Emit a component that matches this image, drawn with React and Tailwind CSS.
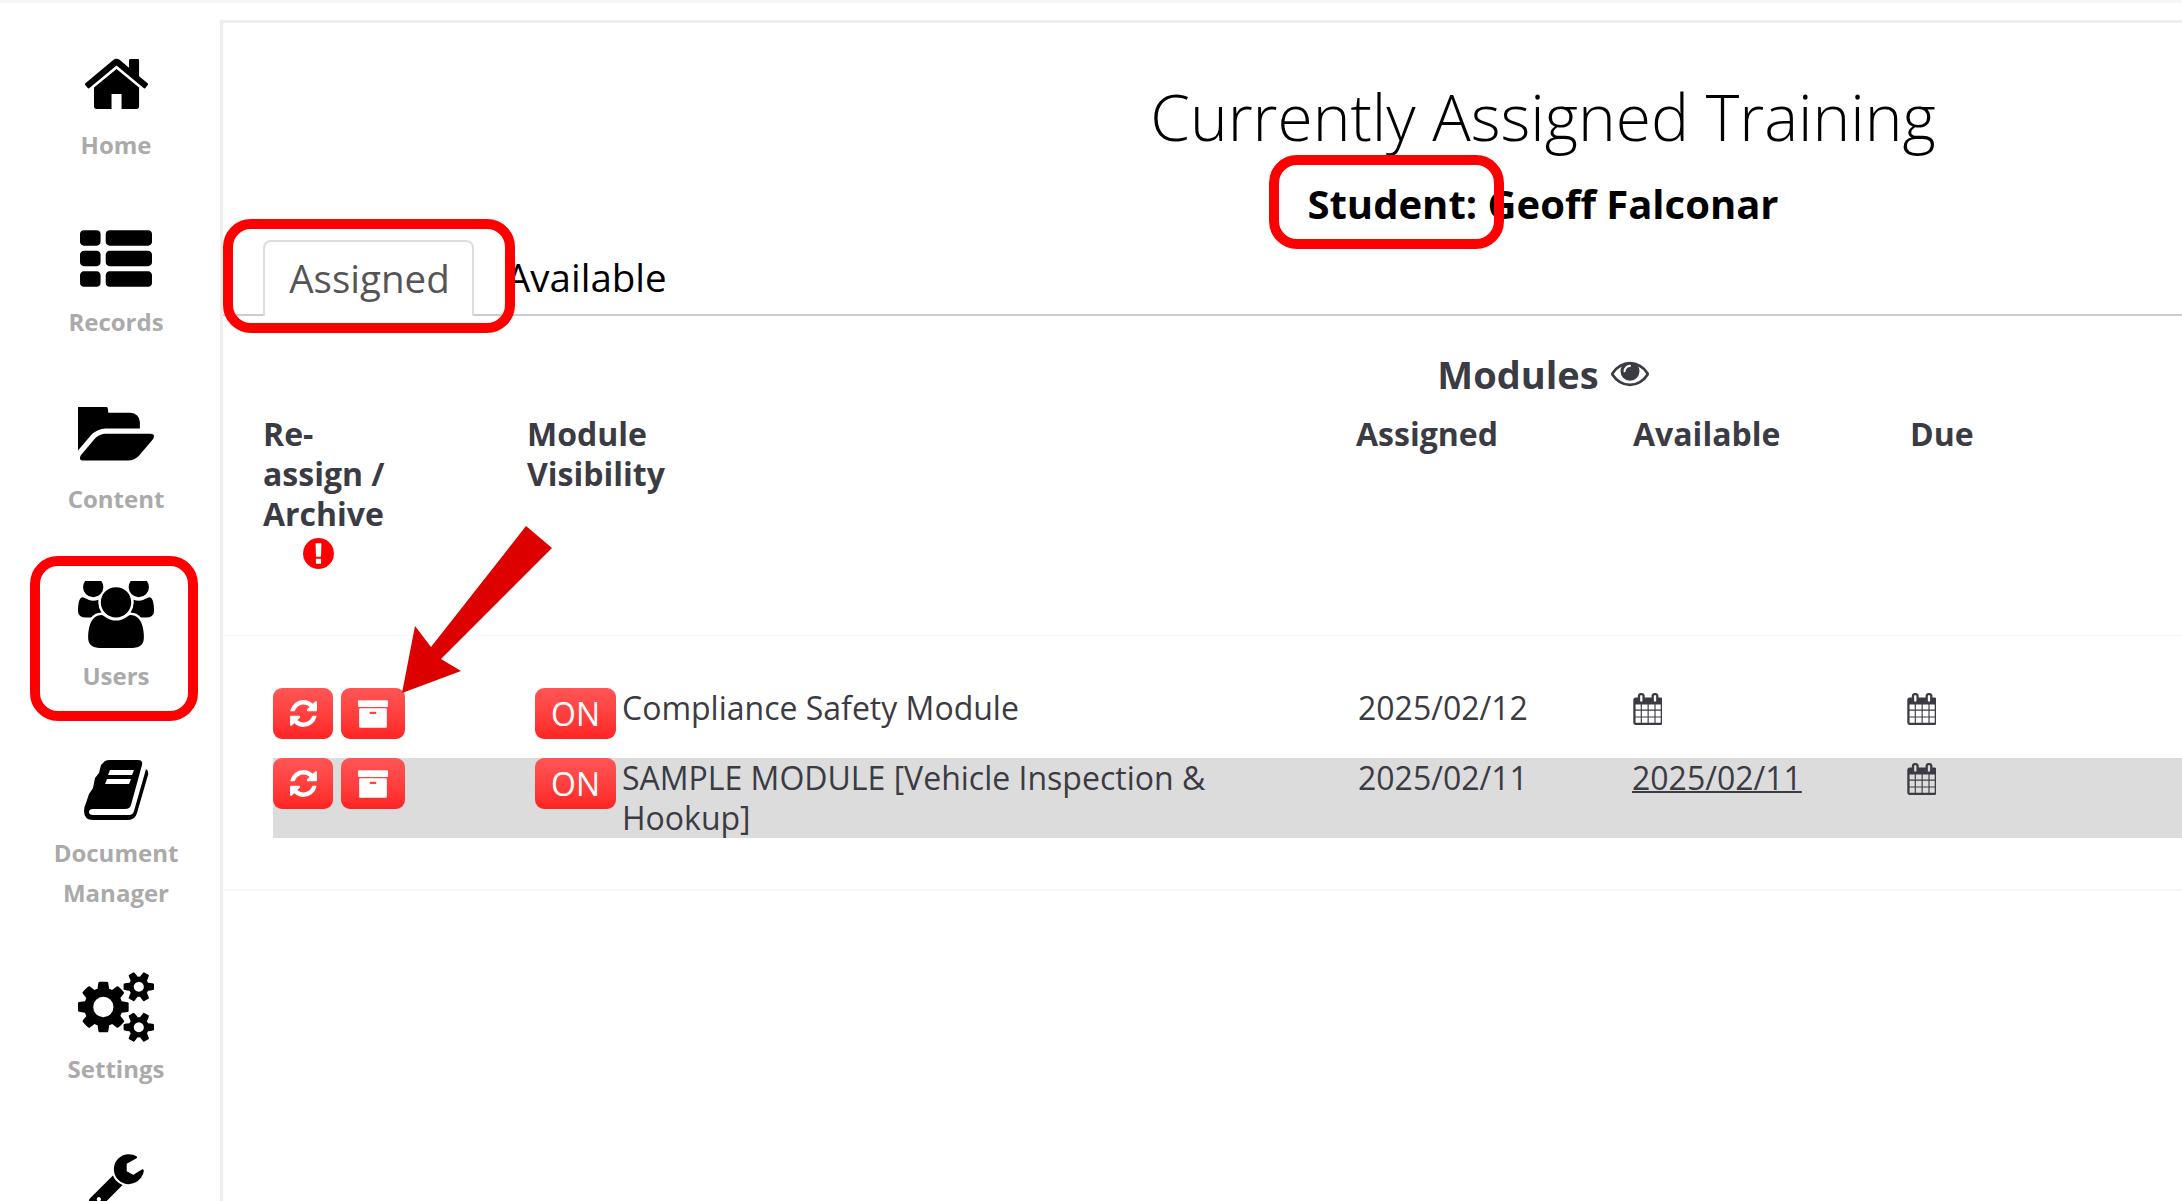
const ICONS = {
  home: ["90 256 1610 1280", "M1472 992v480q0 26-19 45t-45 19h-384v-384h-256v384h-384q-26 0-45-19t-19-45v-480q0-1 .5-3t.5-3l575-474 575 474q1 2 1 6zm223-69l-62 74q-8 9-21 11h-3q-13 0-21-7l-692-577-692 577q-12 8-24 7-13-2-21-11l-62-74q-8-10-7-23.5t11-21.5l719-599q32-26 76-26t76 26l244 204v-195q0-14 9-23t23-9h192q14 0 23 9t9 23v408l219 182q10 8 11 21.5t-7 23.5z"],
  records: ["0 128 1792 1408", "M512 1248v192q0 40-28 68t-68 28h-320q-40 0-68-28t-28-68v-192q0-40 28-68t68-28h320q40 0 68 28t28 68zm0-512v192q0 40-28 68t-68 28h-320q-40 0-68-28t-28-68v-192q0-40 28-68t68-28h320q40 0 68 28t28 68zm1280 512v192q0 40-28 68t-68 28h-960q-40 0-68-28t-28-68v-192q0-40 28-68t68-28h960q40 0 68 28t28 68zm-1280-1024v192q0 40-28 68t-68 28h-320q-40 0-68-28t-28-68v-192q0-40 28-68t68-28h320q40 0 68 28t28 68zm1280 512v192q0 40-28 68t-68 28h-960q-40 0-68-28t-28-68v-192q0-40 28-68t68-28h960q40 0 68 28t28 68zm0-512v192q0 40-28 68t-68 28h-960q-40 0-68-28t-28-68v-192q0-40 28-68t68-28h960q40 0 68 28t28 68z"],
  folder: ["0 256 1845 1344", "M1845 931q0 35-25 76l-336 396q-43 51-120.5 86.5t-143.5 35.5h-1088q-34 0-60.5-13t-26.5-43q0-35 25-76l336-396q43-51 120.5-86.5t143.5-35.5h1088q34 0 60.5 13t26.5 43zm-343-344v160h-832q-94 0-197 47.5t-164 119.5l-337 396-5 6q0-4-.5-12.5t-.5-12.5v-960q0-92 66-158t158-66h320q92 0 158 66t66 158v32h544q92 0 158 66t66 158z"],
  users: ["0 128 1920 1664", "M593 896q-162 5-265 128h-134q-82 0-138-40.5t-56-118.5q0-353 124-353 6 0 43.5 21t97.5 42.5 119 21.5q67 0 133-23-5 37-5 66 0 139 81 256zm1071 637q0 120-73 189.5t-194 69.5h-874q-121 0-194-69.5t-73-189.5q0-53 3.5-103.5t14-109 26.5-108.5 43-97.5 62-81 85.5-53.5 111.5-20q10 0 43 21.5t73 48 107 48 135 21.5 135-21.5 107-48 73-48 43-21.5q61 0 111.5 20t85.5 53.5 62 81 43 97.5 26.5 108.5 14 109 3.5 103.5zm-1024-1277q0 106-75 181t-181 75-181-75-75-181 75-181 181-75 181 75 75 181zm704 384q0 159-112.5 271.5t-271.5 112.5-271.5-112.5-112.5-271.5 112.5-271.5 271.5-112.5 271.5 112.5 112.5 271.5zm576 225q0 78-56 118.5t-138 40.5h-134q-103-123-265-128 81-117 81-256 0-29-5-66 66 23 133 23 59 0 119-21.5t97.5-42.5 43.5-21q124 0 124 353zm-128-609q0 106-75 181t-181 75-181-75-75-181 75-181 181-75 181 75 75 181z"],
  cogs: ["0 128 1920 1536", "M896 896q0-106-75-181t-181-75-181 75-75 181 75 181 181 75 181-75 75-181zm768 512q0-52-38-90t-90-38-90 38-38 90q0 53 37.5 90.5t90.5 37.5 90.5-37.5 37.5-90.5zm0-1024q0-52-38-90t-90-38-90 38-38 90q0 53 37.5 90.5t90.5 37.5 90.5-37.5 37.5-90.5zm-384 421v185q0 10-7 19.5t-16 10.5l-155 24q-11 35-32 76 34 48 90 115 7 11 7 20 0 12-7 19-23 30-82.5 89.5t-78.5 59.5q-11 0-21-7l-115-90q-37 19-77 31-11 108-23 155-7 24-30 24h-186q-11 0-20-7.5t-10-17.5l-23-153q-34-10-75-31l-118 89q-7 7-20 7-11 0-21-8-144-133-144-160 0-9 7-19 10-14 41-53t47-61q-23-44-35-82l-152-24q-10-1-17-9.5t-7-19.5v-185q0-10 7-19.5t16-10.5l155-24q11-35 32-76-34-48-90-115-7-11-7-20 0-12 7-20 22-30 82-89t79-59q11 0 21 7l115 90q34-18 77-32 11-108 23-154 7-24 30-24h186q11 0 20 7.5t10 17.5l23 153q34 10 75 31l118-89q8-7 20-7 11 0 21 8 144 133 144 160 0 8-7 19-12 16-42 54t-45 60q23 48 34 82l152 23q10 2 17 10.5t7 19.5zm640 533v140q0 16-149 31-12 27-30 52 51 113 51 138 0 4-4 7-122 71-124 71-8 0-46-47t-52-68q-20 2-30 2t-30-2q-14 21-52 68t-46 47q-2 0-124-71-4-3-4-7 0-25 51-138-18-25-30-52-149-15-149-31v-140q0-16 149-31 13-29 30-52-51-113-51-138 0-4 4-7 4-2 35-20t59-34 30-16q8 0 46 46.5t52 67.5q20-2 30-2t30 2q51-71 92-112l6-2q4 0 124 70 4 3 4 7 0 25-51 138 17 23 30 52 149 15 149 31zm0-1024v140q0 16-149 31-12 27-30 52 51 113 51 138 0 4-4 7-122 71-124 71-8 0-46-47t-52-68q-20 2-30 2t-30-2q-14 21-52 68t-46 47q-2 0-124-71-4-3-4-7 0-25 51-138-18-25-30-52-149-15-149-31v-140q0-16 149-31 13-29 30-52-51-113-51-138 0-4 4-7 4-2 35-20t59-34 30-16q8 0 46 46.5t52 67.5q20-2 30-2t30 2q51-71 92-112l6-2q4 0 124 70 4 3 4 7 0 25-51 138 17 23 30 52 149 15 149 31z"],
  wrench: ["0 128 1792 1664", "M448 1472q0-26-19-45t-45-19-45 19-19 45 19 45 45 19 45-19 19-45zm644-420l-682 682q-37 37-90 37-52 0-91-37l-106-108q-38-36-38-90 0-53 38-91l681-681q39 98 114.5 173.5t173.5 114.5zm634-435q0 39-23 106-47 134-164.5 217.5t-258.5 83.5q-185 0-316.5-131.5t-131.5-316.5 131.5-316.5 316.5-131.5q58 0 121.5 16.5t107.5 46.5q16 11 16 28t-16 28l-293 169v224l193 107q5-3 79-48.5t135.5-81 70.5-35.5q15 0 23.5 10t8.5 25z"],
  refresh: ["128 128 1536 1536", "M1639 1056q0 5-1 7-64 268-268 434.5t-478 166.5q-146 0-282.5-55t-243.5-157l-129 129q-19 19-45 19t-45-19-19-45v-448q0-26 19-45t45-19h448q26 0 45 19t19 45-19 45l-137 137q71 66 161 102t187 36q134 0 250-65t186-179q11-17 53-117 8-23 30-23h192q13 0 22.5 9.5t9.5 22.5zm25-800v448q0 26-19 45t-45 19h-448q-26 0-45-19t-19-45 19-45l138-138q-148-137-349-137-134 0-250 65t-186 179q-11 17-53 117-8 23-30 23h-199q-13 0-22.5-9.5t-9.5-22.5v-7q65-268 270-434.5t480-166.5q146 0 284 55.5t245 156.5l130-129q19-19 45-19t45 19 19 45z"],
  archive: ["64 128 1664 1536", "M1088 832q0-26-19-45t-45-19h-256q-26 0-45 19t-19 45 19 45 45 19h256q26 0 45-19t19-45zm576-192v960q0 26-19 45t-45 19h-1408q-26 0-45-19t-19-45v-960q0-26 19-45t45-19h1408q26 0 45 19t19 45zm64-448v256q0 26-19 45t-45 19h-1536q-26 0-45-19t-19-45v-256q0-26 19-45t45-19h1536q26 0 45 19t19 45z"],
  alert: ["128 128 1536 1536", "M896 128q209 0 385.5 103t279.5 279.5 103 385.5-103 385.5-279.5 279.5-385.5 103-385.5-103-279.5-279.5-103-385.5 103-385.5 279.5-279.5 385.5-103zm128 1247v-190q0-14-9-23.5t-22-9.5h-192q-13 0-23 10t-10 23v190q0 13 10 23t23 10h192q13 0 22-9.5t9-23.5zm-2-344l18-621q0-12-10-18-10-8-24-8h-220q-14 0-24 8-10 6-10 18l17 621q0 10 10 17.5t24 7.5h185q14 0 23.5-7.5t10.5-17.5z"],
  eye: ["0 320 1792 1280", "M1664 960q-152-236-381-353 61 104 61 225 0 185-131.5 316.5t-316.5 131.5-316.5-131.5-131.5-316.5q0-121 61-225-229 117-381 353 133 205 333.5 326.5t434.5 121.5 434.5-121.5 333.5-326.5zm-720-384q0-20-14-34t-34-14q-125 0-214.5 89.5t-89.5 214.5q0 20 14 34t34 14 34-14 14-34q0-86 61-147t147-61q20 0 34-14t14-34zm848 384q0 34-20 69-140 230-376.5 368.5t-499.5 138.5-499.5-139-376.5-368q-20-35-20-69t20-69q140-229 376.5-368t499.5-139 499.5 139 376.5 368q20 35 20 69z"],
  calendar: ["0 0 1664 1792", "M192 1664h288v-288h-288v288zm352 0h320v-288h-320v288zm-352-352h288v-320h-288v320zm352 0h320v-320h-320v320zm-352-384h288v-288h-288v288zm736 736h320v-288h-320v288zm-384-736h320v-288h-320v288zm768 736h288v-288h-288v288zm-384-352h320v-320h-320v320zm-352-864v-288q0-13-9.5-22.5t-22.5-9.5h-64q-13 0-22.5 9.5t-9.5 22.5v288q0 13 9.5 22.5t22.5 9.5h64q13 0 22.5-9.5t9.5-22.5zm736 864h288v-320h-288v320zm-384-384h320v-288h-320v288zm384 0h288v-288h-288v288zm32-480v-288q0-13-9.5-22.5t-22.5-9.5h-64q-13 0-22.5 9.5t-9.5 22.5v288q0 13 9.5 22.5t22.5 9.5h64q13 0 22.5-9.5t9.5-22.5zm384-64v1280q0 52-38 90t-90 38h-1408q-52 0-90-38t-38-90v-1280q0-52 38-90t90-38h128v-96q0-66 47-113t113-47h64q66 0 113 47t47 113v96h384v-96q0-66 47-113t113-47h64q66 0 113 47t47 113v96h128q52 0 90 38t38 90z"],
};

function Icon({ name, className }) {
  const [viewBox, d] = ICONS[name];
  return (
    <svg viewBox={viewBox} className={className} fill="currentColor">
      <path d={d} />
    </svg>
  );
}

function BookIcon() {
  return (
    <svg viewBox="0 0 65 60" className="w-[65px] h-[60px] mb-[3px] text-black" fill="currentColor">
      <path d="M21 1 Q23 0 26 0 H54 Q59 0 58 5 L47 45 Q46 49 41 49 H9 Q5 49 5 52 Q5 55 9 55 H45 Q49 55 50 51 L62 9 Q65 11 64 15 L53 53 Q51 60 44 60 H9 Q0 60 0 51 Q0 47 2 43 L5 34 L9 28 L11 18 L15 13 L17 5 Z" />
      <path d="M26 10 H50 L48 15 H24 Z M23 19 H47 L45 24 H21 Z" fill="#fff" />
    </svg>
  );
}

const NAV = [
  { label: ["Home"], icon: <Icon name="home" className="w-[63px] h-[52px] mb-[5px]" />, h: "h-[177px]" },
  { label: ["Records"], icon: <Icon name="records" className="w-[72px] h-[57px] mb-[5px]" />, h: "h-[177px]" },
  { label: ["Content"], icon: <Icon name="folder" className="w-[76px] h-[58px] mb-[4px]" />, h: "h-[177px]" },
  { label: ["Users"], icon: <Icon name="users" className="w-[76px] h-[68px] -mb-[3px]" />, h: "h-[177px]" },
  { label: ["Document", "Manager"], icon: <BookIcon />, h: "h-[216px]" },
  { label: ["Settings"], icon: <Icon name="cogs" className="w-[76px] h-[70px] -mb-[3px]" />, h: "h-[170px]" },
  { label: [], icon: <Icon name="wrench" className="w-[60px] h-[60px] -mb-[3px]" />, h: "h-[80px]" },
];

function NavItem({ item }) {
  return (
    <div className={`${item.h} flex flex-col items-center`}>
      <div className="h-[70px] flex items-end text-black">{item.icon}</div>
      <div className="mt-[10px] text-center text-[24px] leading-[40px] font-bold text-[#aaaaaa]">
        {item.label.map((line) => (
          <div key={line}>{line}</div>
        ))}
      </div>
    </div>
  );
}

const redBtn =
  "h-[51px] rounded-[9px] bg-gradient-to-b from-[#ff5555] to-[#ff2222] text-white flex items-center justify-center";

function Row({ name, assigned, available, shaded }) {
  return (
    <div
      className={`grid grid-cols-[262px_823px_274px_274px_1fr] text-[32px] leading-[40px] text-[#3b3b44] ${
        shaded ? "bg-[#dcdcdc] h-[80px]" : "h-[70px]"
      }`}
    >
      <div className="flex gap-[8px]">
        <div className={`${redBtn} w-[60px]`}>
          <Icon name="refresh" className="w-[27px] h-[27px]" />
        </div>
        <div className={`${redBtn} w-[64px]`}>
          <Icon name="archive" className="w-[30px] h-[28px]" />
        </div>
      </div>
      <div className="flex">
        <div className={`${redBtn} w-[81px] shrink-0 text-[32px]`}>ON</div>
        <div className="ml-[6px] w-[640px]">{name}</div>
      </div>
      <div>{assigned}</div>
      <div>
        {available ? (
          <span className="underline decoration-[2px]">{available}</span>
        ) : (
          <Icon name="calendar" className="w-[30px] h-[32px] mt-[5px]" />
        )}
      </div>
      <div>
        <Icon name="calendar" className="w-[30px] h-[32px] mt-[5px]" />
      </div>
    </div>
  );
}

export default function App() {
  return (
    <div className="relative w-[2182px] h-[1201px] overflow-hidden bg-white font-['Open_Sans',sans-serif]">
      <div className="h-[3px] bg-[#f6f6f6]" />
      <div className="flex h-[1198px]">
        <aside className="w-[220px] shrink-0 pt-[42px] pl-[12px]">
          {NAV.map((item, i) => (
            <NavItem key={i} item={item} />
          ))}
        </aside>
        <main className="flex-1 mt-[17px] border-l-[3px] border-t-[3px] border-[#eeeeee] min-w-0">
          <div className="w-[2640px]">
            <h1 className="text-center text-[64px] leading-[80px] font-light text-black pt-[54px]">
              Currently Assigned Training
            </h1>
            <div className="text-center text-[40px] leading-[50px] font-bold text-black mt-[22px]">
              Student: Geoff Falconar
            </div>
            <div className="flex items-end h-[90px] -mt-[3px] pl-[40px] border-b-2 border-[#cccccc] text-[38.5px]">
              <div className="w-[211px] h-[76px] -mb-[2px] pl-[2px] border-2 border-b-0 border-[#dddddd] bg-white rounded-t-[8px] flex items-center justify-center text-[#555555]">
                Assigned
              </div>
              <div className="h-[72px] flex items-center pl-[32px] text-black">Available</div>
            </div>
            <div className="text-center text-[38px] leading-[50px] font-bold text-[#3b3b44] mt-[33px] flex justify-center items-center gap-[12px]">
              Modules
              <Icon name="eye" className="w-[38px] h-[28px]" />
            </div>
            <div className="grid grid-cols-[264px_829px_277px_277px_1fr] pl-[40px] h-[237px] pt-[15px] text-[32px] leading-[40px] font-bold text-[#3b3b44] border-b border-[#f7f7f7]">
              <div>
                Re-
                <br />
                assign /
                <br />
                Archive
                <Icon name="alert" className="w-[31px] h-[31px] text-[#ff0000] ml-[40px] mt-[4px]" />
              </div>
              <div>
                Module
                <br />
                Visibility
              </div>
              <div>Assigned</div>
              <div>Available</div>
              <div>Due</div>
            </div>
            <div className="pl-[50px] pt-[52px]">
              <Row name="Compliance Safety Module" assigned="2025/02/12" />
              <Row
                shaded
                name="SAMPLE MODULE [Vehicle Inspection & Hookup]"
                assigned="2025/02/11"
                available="2025/02/11"
              />
            </div>
            <div className="mt-[51px] border-b-2 border-[#f7f7f7]" />
          </div>
        </main>
      </div>

      <div className="absolute left-[30px] top-[556px] w-[168px] h-[165px] border-[10px] border-[#ff0000] rounded-[28px]" />
      <div className="absolute left-[223px] top-[219px] w-[292px] h-[114px] border-[10px] border-[#ff0000] rounded-[28px]" />
      <div className="absolute left-[1269px] top-[155px] w-[235px] h-[94px] border-[10px] border-[#ff0000] rounded-[28px]" />
      <svg className="absolute left-[400px] top-[524px] w-[154px] h-[171px]" viewBox="400 524 154 171" fill="#dd0000">
        <polygon points="526,526 552,548 441,659 461,671 402,693 415,626 431,647" />
      </svg>
    </div>
  );
}
